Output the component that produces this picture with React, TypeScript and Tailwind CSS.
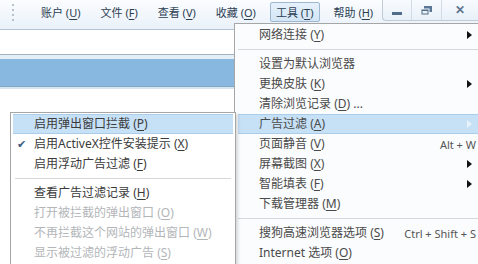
import React from "react";

type Item = {
  t?: string;
  k?: string;
  suffix?: string;
  arrow?: boolean;
  active?: boolean;
  shortcut?: string;
  check?: boolean;
  disabled?: boolean;
  sep?: boolean;
};

const toolsMenu: Item[] = [
  { t: "网络连接", k: "Y", arrow: true },
  { sep: true },
  { t: "设置为默认浏览器" },
  { t: "更换皮肤", k: "K", arrow: true },
  { t: "清除浏览记录", k: "D", suffix: " ..." },
  { t: "广告过滤", k: "A", arrow: true, active: true },
  { t: "页面静音", k: "V", shortcut: "Alt + W" },
  { t: "屏幕截图", k: "X", arrow: true },
  { t: "智能填表", k: "F", arrow: true },
  { t: "下载管理器", k: "M" },
  { sep: true },
  { t: "搜狗高速浏览器选项", k: "S", shortcut: "Ctrl + Shift + S" },
  { t: "Internet 选项", k: "O" },
];

const adMenu: Item[] = [
  { t: "启用弹出窗口拦截", k: "P", active: true },
  { t: "启用ActiveX控件安装提示", k: "X", check: true },
  { t: "启用浮动广告过滤", k: "F" },
  { sep: true },
  { t: "查看广告过滤记录", k: "H" },
  { t: "打开被拦截的弹出窗口", k: "O", disabled: true },
  { t: "不再拦截这个网站的弹出窗口", k: "W", disabled: true },
  { t: "显示被过滤的浮动广告", k: "S", disabled: true },
];

const topMenu = [
  { t: "账户", k: "U" },
  { t: "文件", k: "F" },
  { t: "查看", k: "V" },
  { t: "收藏", k: "O" },
  { t: "工具", k: "T", on: true },
  { t: "帮助", k: "H" },
];

const Arrow = ({ light }: { light?: boolean }) => (
  <svg width="5" height="8" viewBox="0 0 5 8" className="shrink-0">
    <path d="M0 0 L5 4 L0 8 Z" fill={light ? "#e8f3fc" : "#111"} />
  </svg>
);

const Label = ({ it }: { it: Item }) => (
  <span className="whitespace-nowrap">
    {it.t}
    {it.k && (
      <>
        {" "}(<span className="underline underline-offset-2">{it.k}</span>)
      </>
    )}
    {it.suffix}
  </span>
);

const MenuRows = ({ items, sepClass, color }: { items: Item[]; sepClass: string; color: string }) => (
  <>
    {items.map((it, i) =>
      it.sep ? (
        <div key={i} className={sepClass}>
          <div className="h-px bg-[#d6d9dc]" />
        </div>
      ) : (
        <div
          key={i}
          className={
            "relative flex items-center h-[20px] pl-[21px] pr-[6px] " +
            (it.active ? "bg-[#c6e0f6] border-y border-[#a9cdea] " : "border-y border-transparent ") +
            (it.disabled ? "text-[#b3b6b9]" : color)
          }
        >
          {it.check && (
            <span className="absolute left-[4px] top-[3px] text-[11px] text-[#3b5b80]">✔</span>
          )}
          <Label it={it} />
          <div className="flex-1" />
          {it.shortcut && (
            <span className="text-[11px] text-[#555] mr-[-4px] whitespace-nowrap">{it.shortcut}</span>
          )}
          {it.arrow && <Arrow light={it.active} />}
        </div>
      )
    )}
  </>
);

const App = () => {
  return (
    <div
      className="relative w-[478px] h-[264px] overflow-hidden bg-white text-[11px] leading-none"
      style={{ fontFamily: '"Noto Sans", "Noto Sans CJK SC", sans-serif' }}
    >
      {/* menu bar */}
      <div className="flex h-[30px] bg-gradient-to-b from-[#fbfdff] to-[#e9f1f9] border-b border-[#b4c3d2]">
        <div className="w-[24px] flex flex-col items-center justify-center gap-[3px] pl-[2px] pb-[4px]">
          {[0, 1, 2, 3].map((d) => (
            <div key={d} className="w-[2px] h-[2px] bg-[#b8c2cc]" />
          ))}
        </div>
        <div className="flex items-start pt-[2px] pl-[11px] gap-[8px] text-[#2c3e52]">
          {topMenu.map((m) => (
            <div
              key={m.t}
              className={
                "h-[20px] flex items-center px-[5px] whitespace-nowrap rounded-[2px] " +
                (m.on ? "bg-gradient-to-b from-[#e6f1fb] to-[#d3e5f6] border border-[#9fb8d0]" : "border border-transparent")
              }
            >
              {m.t} (<span className="underline underline-offset-2">{m.k}</span>)
            </div>
          ))}
        </div>
        <div className="flex-1" />
        <div className="flex h-[21px] w-[96px] shrink-0 border-l border-b border-[#bfcbd7] rounded-bl-[4px] bg-gradient-to-b from-[#f8fbfe] to-[#e8f0f8]">
          <div className="w-[29px] flex items-center justify-center border-r border-[#d3dce5]">
            <div className="w-[10px] h-[3px] mt-[6px] bg-[#4f6c8a]" />
          </div>
          <div className="w-[30px] flex items-center justify-center border-r border-[#d3dce5]">
            <svg width="11" height="9" viewBox="0 0 11 9">
              <rect x="3" y="0" width="8" height="6" fill="#5a7896" />
              <rect x="0" y="3" width="8" height="6" fill="#4f6c8a" stroke="#eef3f8" strokeWidth="1" />
              <rect x="1.5" y="5" width="5" height="2.5" fill="#eef3f8" />
            </svg>
          </div>
          <div className="flex-1 flex items-center justify-center text-[#5f7690] text-[12px] font-bold">
            ✕
          </div>
        </div>
      </div>

      {/* address strip */}
      <div className="h-[25px] bg-white border-b border-[#a3b2bf]" />
      <div className="h-[4px] bg-[#e4eef7]" />
      {/* blue band */}
      <div className="h-[28px] bg-[#88b8df] border-b border-[#7ea8c8]" />
      <div className="h-[2px] bg-[#d8e4ee]" />

      {/* tools dropdown */}
      <div className="absolute left-[234px] top-[23px] w-[244px] h-[250px] bg-[#fbfcfd] border-l border-t border-[#a6a6a6] pt-[1px] pl-[3px] text-[12px]">
        <MenuRows items={toolsMenu} sepClass="py-[4px]" color="text-[#4a4a4a]" />
      </div>

      {/* ad filter submenu */}
      <div className="absolute left-[10px] top-[112px] w-[226px] h-[160px] bg-white border border-[#a6a6a6] pt-[1px] px-[2px] text-[12px] shadow-[2px_2px_3px_rgba(0,0,0,0.15)]">
        <MenuRows items={adMenu} sepClass="py-[4px] px-[2px]" color="text-[#3a3a3a]" />
      </div>
    </div>
  );
};

export default App;
